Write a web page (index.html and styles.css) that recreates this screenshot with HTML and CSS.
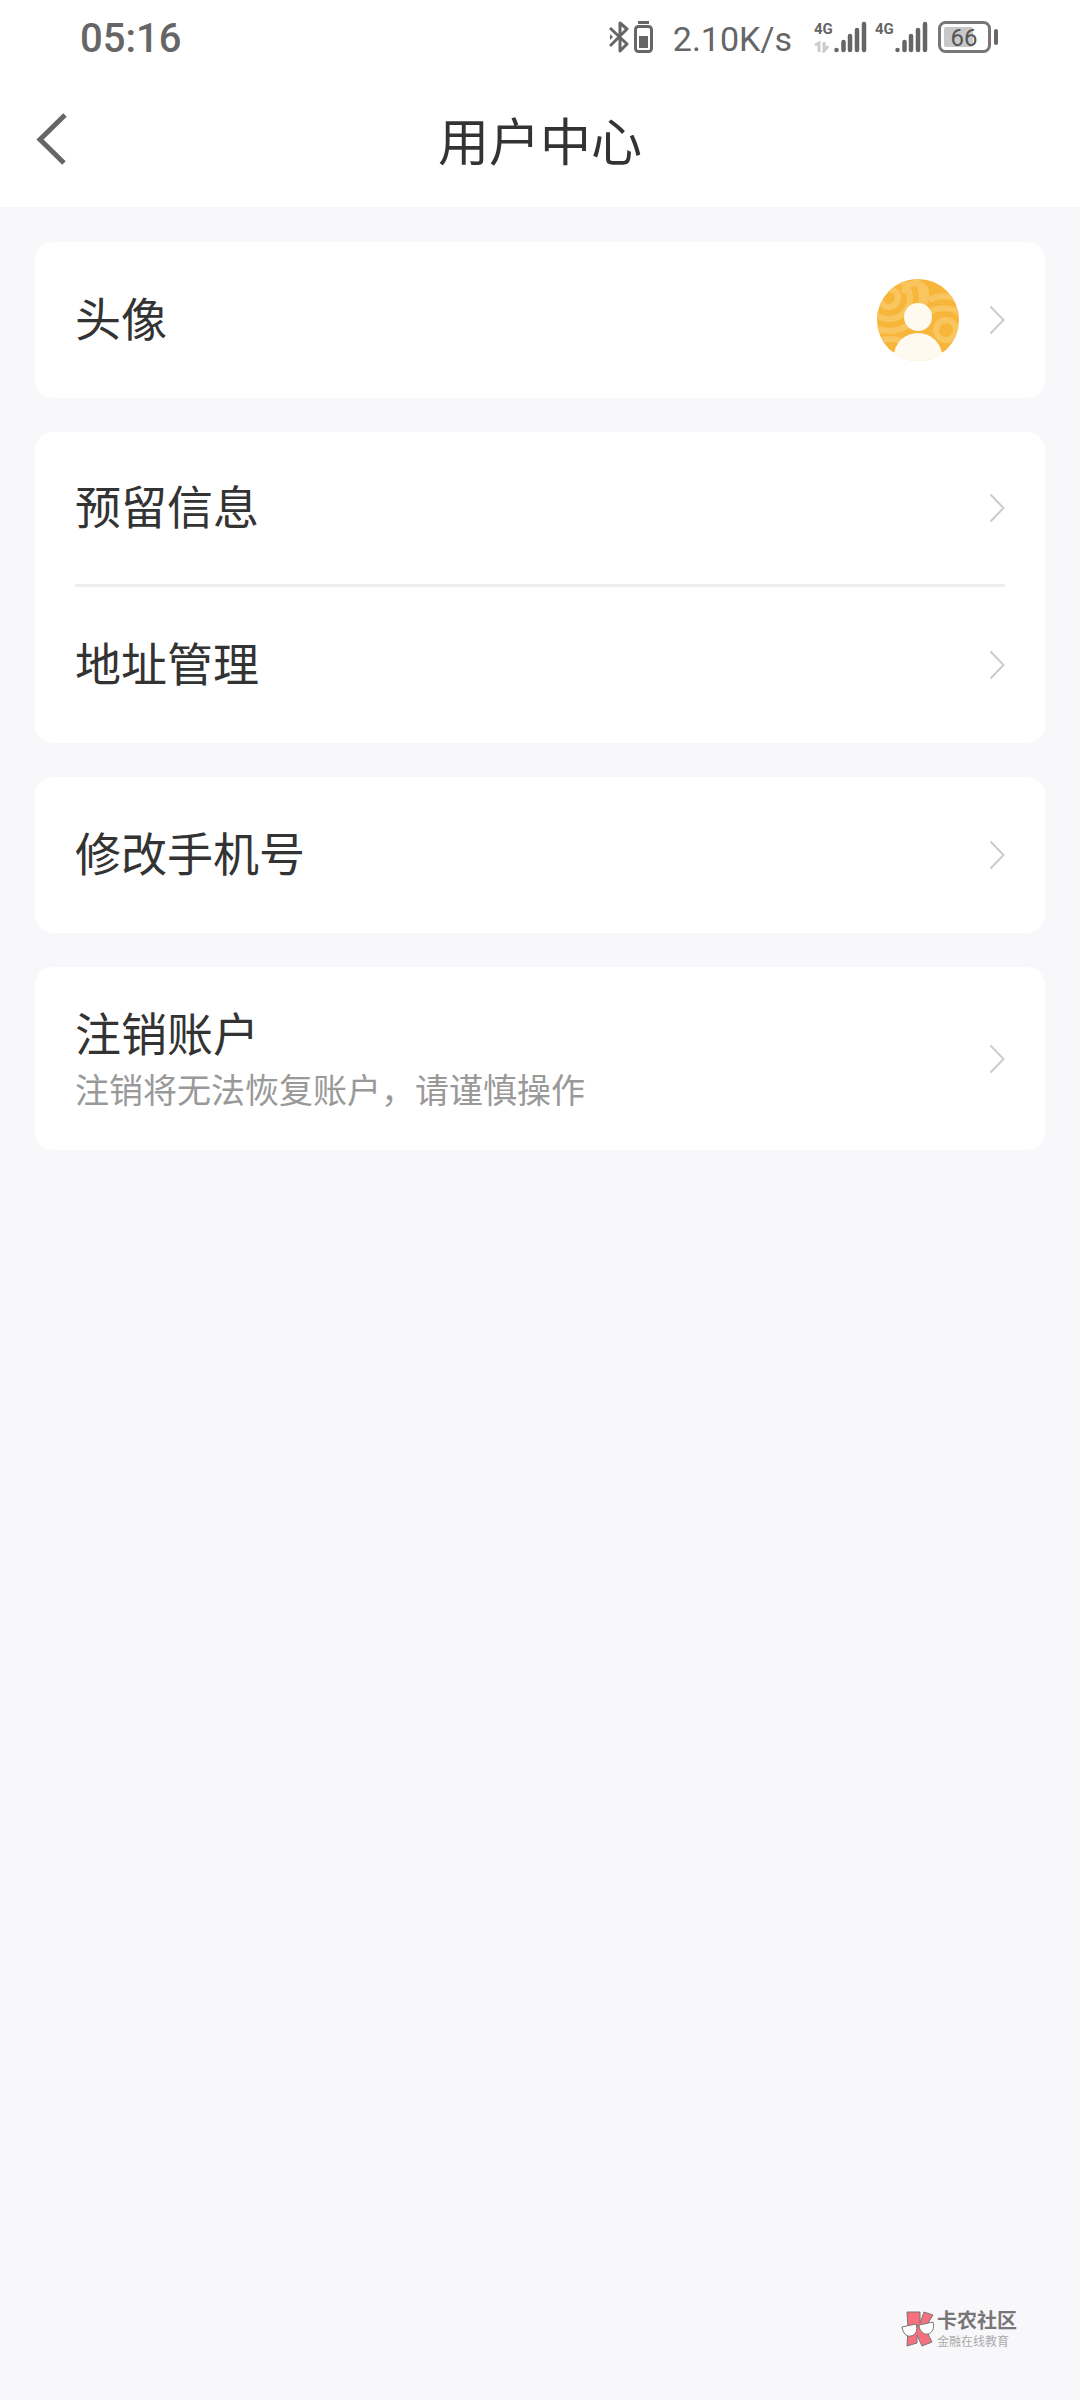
FILE: index.html
```html
<!DOCTYPE html>
<html lang="zh-CN">
<head>
<meta charset="utf-8">
<meta name="viewport" content="width=device-width, initial-scale=1">
<title>用户中心</title>
<link rel="stylesheet" href="styles.css">
</head>
<body>
<svg class="defs" width="0" height="0" aria-hidden="true">
  <symbol id="chevron" viewBox="0 0 16 30"><path d="M1.500 1.500 14.500 15 1.500 28.500" fill="none" stroke="#ccc" stroke-width="2"/></symbol>
  <symbol id="bars" viewBox="0 0 34 32"><path d="M3.500 29v0M10.500 21v8M17 15v14M24 9v20M31 3v26" fill="none" stroke="#666" stroke-width="4.500" stroke-linecap="round"/></symbol>
</svg>
<div class="page">
  <header class="top">
    <div class="status">
      <time class="clock">05:16</time>
      <div class="indicators">
        <svg class="bluetooth" width="44" height="34" viewBox="0 0 44 34" fill="none" stroke="#666" stroke-width="3">
          <path d="M1 8 18 24 11 31V3l7 6L1 26" stroke-linejoin="round"/>
          <path d="M1 14v6l3-3z" fill="#666" stroke="none"/>
          <rect x="26.500" y="6.500" width="16" height="25" rx="3"/>
          <path d="M29 2.500h11"/>
          <path d="M30 16h9v12h-9z" fill="#666" stroke="none"/>
        </svg>
        <span class="speed">2.10K/s</span>
        <div class="signal">
          <div class="network"><span>4G</span>
            <svg width="16" height="12" viewBox="0 0 16 12" fill="none" stroke="#ccc" stroke-width="3"><path d="M1 4 5 2v9M10 1v9l4-5"/></svg>
          </div>
          <svg class="bars" width="34" height="32"><use href="#bars"/></svg>
        </div>
        <div class="signal">
          <div class="network"><span>4G</span></div>
          <svg class="bars" width="34" height="32"><use href="#bars"/></svg>
        </div>
        <svg class="battery" width="60" height="34" viewBox="0 0 60 34">
          <rect x="1.500" y="2.500" width="50" height="29" rx="6" fill="none" stroke="#777" stroke-width="3"/>
          <rect x="6" y="7" width="29" height="20" rx="2" fill="#c8c8c8"/>
          <rect x="56" y="9" width="4" height="16" rx="2" fill="#666"/>
          <text x="26" y="26" text-anchor="middle" class="level">66</text>
        </svg>
      </div>
    </div>
    <nav class="nav">
      <button class="back" type="button" aria-label="返回">
        <svg width="32" height="52" viewBox="0 0 32 52"><path d="M29 2 4 26.500 28 50" fill="none" stroke="#666" stroke-width="5"/></svg>
      </button>
      <h1 class="title">用户中心</h1>
    </nav>
  </header>

  <main class="list">
    <section class="card">
      <a class="row" href="#avatar">
        <span class="label">头像</span>
        <svg class="avatar" width="82" height="82" viewBox="0 0 82 82">
          <defs><clipPath id="disc"><circle cx="41" cy="41" r="41"/></clipPath></defs>
          <g clip-path="url(#disc)">
            <path fill="#f7b63a" d="M0 0h82v82H0z"/>
            <g fill="none" stroke="#f9c55f" stroke-width="6">
              <circle cx="12" cy="19" r="9"/><circle cx="12" cy="19" r="21"/><circle cx="12" cy="19" r="33"/>
              <path d="M27 14c1-14 22-12 22 0s-5 16-12 17"/>
              <path d="M52 21c10-5 22-5 31 1M52 33c10-5 22-5 31 1"/>
              <circle cx="69" cy="51" r="10"/>
              <path d="M0 62c14-4 24-2 32 4"/>
            </g>
            <path d="M0 73h82v9H0z" fill="#fff"/>
            <circle cx="41" cy="38" r="14" fill="#fffaf0"/>
            <ellipse cx="41" cy="77" rx="24" ry="23" fill="#fffaf0"/>
          </g>
        </svg>
        <svg class="chevron" width="16" height="30"><use href="#chevron"/></svg>
      </a>
    </section>
    <section class="card">
      <a class="row" href="#message"><span class="label">预留信息</span><svg class="chevron" width="16" height="30"><use href="#chevron"/></svg></a>
      <a class="row" href="#address"><span class="label">地址管理</span><svg class="chevron" width="16" height="30"><use href="#chevron"/></svg></a>
    </section>
    <section class="card">
      <a class="row" href="#phone"><span class="label">修改手机号</span><svg class="chevron" width="16" height="30"><use href="#chevron"/></svg></a>
    </section>
    <section class="card">
      <a class="row row-tall" href="#close">
        <span class="label">注销账户<small class="note">注销将无法恢复账户，请谨慎操作</small></span>
        <svg class="chevron" width="16" height="30"><use href="#chevron"/></svg>
      </a>
    </section>
  </main>

  <footer class="brand">
    <svg width="34" height="36" viewBox="0 0 34 36" stroke="#777" stroke-width="1">
      <path d="M6 1h13v11l4-11 9 3-8 13 7 14-10 4-5-11v8L6 35l1-17z" fill="#f4717d"/>
      <path d="M1 16l14-3c2 6 0 11-5 12S2 22 1 16zM18 14l14-3c2 6-1 11-5 12s-9-3-9-9z" fill="#fff"/>
      <path d="M15 15l3-1" fill="none"/>
    </svg>
    <div class="brand-text">
      <strong>卡农社区</strong>
      <span>金融在线教育</span>
    </div>
  </footer>
</div>
</body>
</html>
```

FILE: styles.css
```css
* { box-sizing: border-box; }

body {
  margin: 0;
  background: #f8f8fb;
  color: #333;
  font-family: "Noto Sans CJK SC", sans-serif;
}

.defs { position: absolute; }
svg { display: block; flex: none; }

.page {
  display: flex;
  flex-direction: column;
  min-height: 100vh;
}

/* Status bar and title */
.top { background: #fff; }

.status {
  display: flex;
  align-items: center;
  justify-content: space-between;
  height: 74px;
  padding: 0 82px 0 80px;
  color: #666;
  font-family: Roboto, sans-serif;
}

.clock {
  padding-top: 4px;
  font-size: 40px;
  font-weight: 500;
  line-height: 48px;
}

.indicators { display: flex; align-items: center; }

.speed {
  margin: 0 22px 0 20px;
  padding-top: 4px;
  font-size: 34px;
  line-height: 40px;
}

.signal { display: flex; height: 32px; margin-right: 8px; }

.network {
  display: flex;
  flex-direction: column;
  justify-content: space-between;
  width: 19px;
  font-size: 15px;
  font-weight: 700;
  line-height: 16px;
}

.battery { margin-left: 2px; }
.level { fill: #555; font-size: 24px; }

.nav {
  display: grid;
  grid-template-columns: 1fr auto 1fr;
  align-items: center;
  height: 133px;
  padding: 0 36px 4px;
}

.back {
  justify-self: start;
  padding: 0;
  border: 0;
  background: none;
}

.title {
  margin: 0;
  font-size: 51px;
  font-weight: 400;
  line-height: 72px;
}

/* Settings cards */
.list {
  display: flex;
  flex-direction: column;
  gap: 34px;
  padding: 35px;
}

.card {
  padding: 0 40px;
  border-radius: 18px;
  background: #fff;
}

.row {
  display: flex;
  align-items: center;
  min-height: 156px;
  color: inherit;
  text-decoration: none;
}

.row:not(:last-child) { min-height: 152px; }
.row + .row { min-height: 159px; border-top: 3px solid #eee; }
.row-tall { min-height: 183px; }

.label {
  flex: 1;
  padding-bottom: 8px;
  font-size: 46px;
  line-height: 60px;
}

.row-tall .label { padding-bottom: 0; }

.note {
  display: block;
  color: #999;
  font-size: 34px;
  line-height: 56px;
}

.avatar { margin-right: 30px; }

/* Community mark */
.brand {
  display: flex;
  align-items: center;
  gap: 2px;
  margin-top: auto;
  margin-left: auto;
  padding: 0 63px 50px 0;
  color: #777;
}

.brand-text { display: flex; flex-direction: column; }
.brand-text strong { font-size: 20px; line-height: 24px; }
.brand-text span { color: #aaa; font-size: 12px; line-height: 18px; }
```
